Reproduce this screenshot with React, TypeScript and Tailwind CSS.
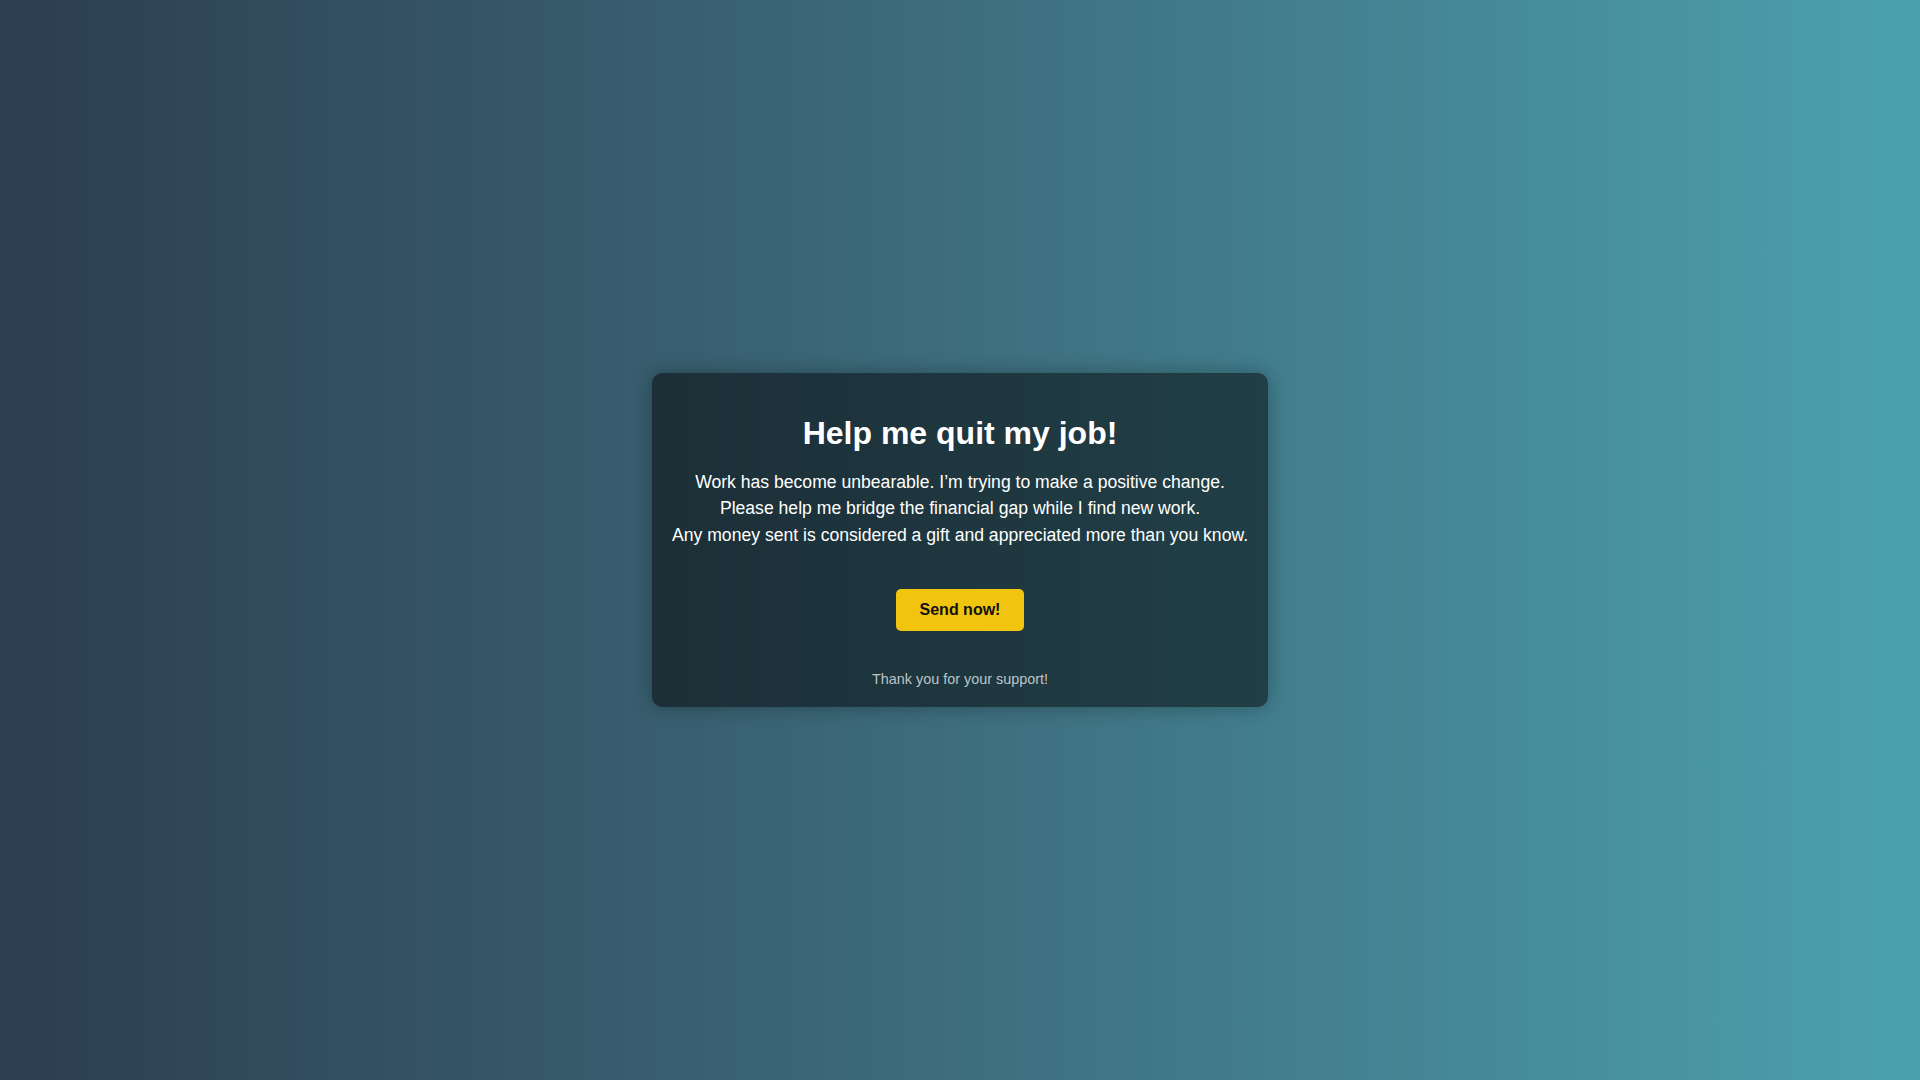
export default function App() {
  return (
    <div className="min-h-screen w-full flex items-center justify-center bg-gradient-to-r from-[#2c3e50] to-[#4ca1af] font-['Liberation_Sans',Arial,sans-serif]">
      <div className="w-[616px] rounded-[10px] bg-black/50 px-5 pt-5 pb-[16.6px] text-center shadow-[0_0_20px_rgba(0,0,0,0.3)]">
        <h1 className="mt-[22px] text-[32px] leading-[37px] font-bold text-white">
          Help me quit my job!
        </h1>
        <p className="mt-[17px] whitespace-nowrap text-[17.6px] leading-[26.4px] text-white">
          Work has become unbearable. I’m trying to make a positive change.
          <br />
          Please help me bridge the financial gap while I find new work.
          <br />
          Any money sent is considered a gift and appreciated more than you know.
        </p>
        <div className="mt-[41px] flex justify-center">
          <button className="h-[42px] rounded-[5px] bg-[#f1c40f] px-6 text-[16px] font-bold text-[#111] cursor-pointer">
            Send now!
          </button>
        </div>
        <p className="mt-[38px] text-[14.4px] leading-[21.6px] text-[#bdc3c7]">
          Thank you for your support!
        </p>
      </div>
    </div>
  );
}
